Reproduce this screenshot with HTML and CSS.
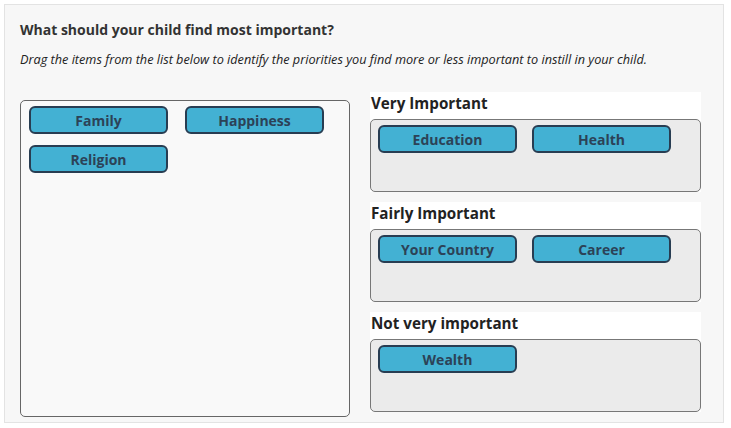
FILE: index.html
```html
<!DOCTYPE html>
<html>
<head>
<meta charset="utf-8">
<link rel="stylesheet" href="styles.css">
</head>
<body>
<div class="panel">
  <h1 class="title">What should your child find most important?</h1>
  <p class="hint">Drag the items from the list below to identify the priorities you find more or less important to instill in your child.</p>
  <div class="board">
    <div class="pool">
      <div class="chip">Family</div>
      <div class="chip">Happiness</div>
      <div class="chip">Religion</div>
    </div>
    <div class="groups">
      <section class="group">
        <h2 class="group-title">Very Important</h2>
        <div class="drop">
          <div class="chip">Education</div>
          <div class="chip">Health</div>
        </div>
      </section>
      <section class="group">
        <h2 class="group-title">Fairly Important</h2>
        <div class="drop">
          <div class="chip">Your Country</div>
          <div class="chip">Career</div>
        </div>
      </section>
      <section class="group">
        <h2 class="group-title">Not very important</h2>
        <div class="drop">
          <div class="chip">Wealth</div>
        </div>
      </section>
    </div>
  </div>
</div>
</body>
</html>
```
FILE: styles.css
```css
html, body {
  margin: 0;
  padding: 0;
  background: #ffffff;
}
body {
  font-family: "Open Sans", "Noto Sans", sans-serif;
  color: #333333;
}
.panel {
  box-sizing: border-box;
  margin: 4px 0 0 4px;
  width: 720px;
  height: 419px;
  border: 1px solid #e3e3e3;
  background: #f7f7f7;
  padding: 15px 15px 0 15px;
}
.title {
  margin: 0;
  font-size: 14px;
  line-height: 20px;
  font-weight: 700;
  color: #333333;
}
.hint {
  margin: 10px 0 0 0;
  font-size: 12.7px;
  line-height: 18px;
  font-style: italic;
  color: #222222;
}
.board {
  display: grid;
  grid-template-columns: 330px 331px;
  column-gap: 20px;
  align-items: start;
  margin-top: 24px;
}
.pool {
  box-sizing: border-box;
  margin-top: 8px;
  height: 317px;
  border: 1px solid #666666;
  border-radius: 5px;
  background: #f9f9f9;
  padding: 5px 8px;
  display: flex;
  flex-wrap: wrap;
  align-content: flex-start;
  column-gap: 17px;
  row-gap: 11px;
}
.groups {
  display: flex;
  flex-direction: column;
  gap: 10px;
}
.group {
  background: #ffffff;
  display: flex;
  flex-direction: column;
}
.group-title {
  margin: 0;
  height: 27px;
  padding-left: 1px;
  font-size: 15.2px;
  line-height: 22px;
  font-weight: 700;
  color: #222222;
}
.drop {
  box-sizing: border-box;
  height: 73px;
  border: 1px solid #777777;
  border-radius: 5px;
  background: #ebebeb;
  padding: 5px 7px;
  display: flex;
  flex-wrap: wrap;
  align-content: flex-start;
  column-gap: 15px;
  row-gap: 11px;
}
.chip {
  box-sizing: border-box;
  width: 139px;
  height: 28px;
  border: 2px solid #283d52;
  border-radius: 6px;
  background: #43b1d3;
  color: #2c4257;
  font-size: 14px;
  font-weight: 700;
  line-height: 26px;
  text-align: center;
}
```
